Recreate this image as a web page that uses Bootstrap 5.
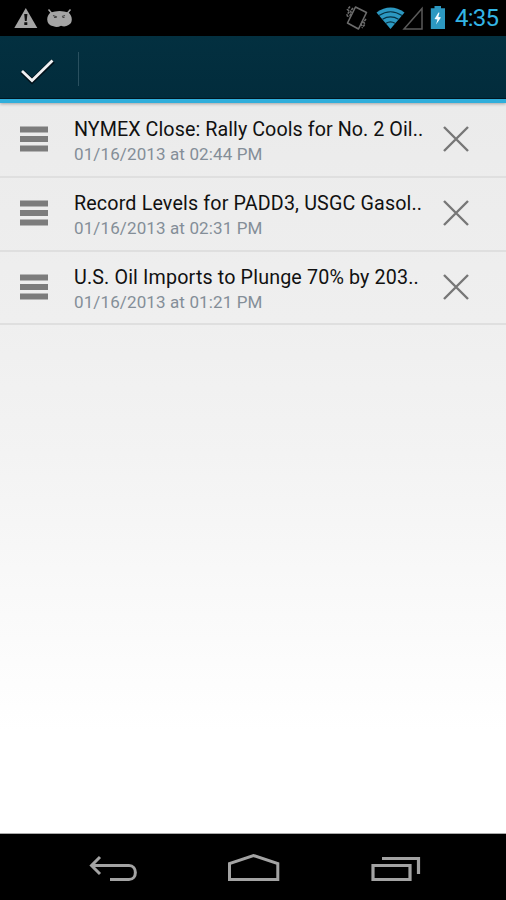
<!DOCTYPE html>
<html lang="en">
<head>
<meta charset="utf-8">
<meta name="viewport" content="width=device-width, initial-scale=1">
<title>Edit saved articles</title>
<link rel="stylesheet" href="https://cdn.jsdelivr.net/npm/bootstrap@5.3.0/dist/css/bootstrap.min.css">
<style>
body { font-family: Roboto, sans-serif; height: 900px; overflow: hidden; }
svg { display: block; flex: none; }
.status-bar { height: 36px; background: #000; padding: 0 8px 0 14px; }
.clock { font-size: 24px; line-height: 37px; color: #33b5e5; width: 43px; white-space: nowrap; letter-spacing: -.8px; }
.action-bar { height: 67px; background: linear-gradient(#033040, #022c3c); border-bottom: 4px solid #30aedb; box-shadow: inset 0 -1px #001722, 0 1px 3px rgba(0,0,0,.3); z-index: 1; }
.done-btn { width: 78px; height: 60px; padding: 6px 0 0 18px; border: 0; border-radius: 0; }
.bar-rule { width: 1px; height: 34px; margin-top: 3px; background: #29505f; }
.articles { background: linear-gradient(#ebebeb 0, #efefef 30%, #f3f3f3 48%, #fff 86%); padding-top: 1px; }
.article { height: 73.8px; padding: 0 35px 0 20px; border-bottom: 2px solid #dfdfdf; }
.article-text { width: 350px; margin-left: 26px; padding-top: 13px; }
.headline { font-size: 19.7px; line-height: 25px; color: #111; letter-spacing: .07px; }
.article:nth-child(2) .headline { letter-spacing: .15px; }
.article:nth-child(3) .headline { letter-spacing: .15px; }
.stamp { font-size: 17px; line-height: 24px; color: #848e98; letter-spacing: .12px; }
.nav-keys { height: 67px; background: #000; border-top: 1px solid #aaa; padding: 0 84px; }
</style>
</head>
<body class="d-flex flex-column m-0">
<header class="status-bar d-flex align-items-center justify-content-between">
  <svg width="60" height="36" viewBox="14 0 60 36" fill="#a5a5a5">
    <path d="M25.800 8L37.300 28H14.300Z"/>
    <path d="M24.200 14h3.200l-.7 7h-1.800zM24.300 22.300h3v2.600h-3z" fill="#111"/>
    <path d="M48.500 9.500L51.500 13M70.500 9.500L67.500 13" stroke="#a5a5a5" stroke-width="1.500"/>
    <path d="M50.500 12.500Q59.500 9.500 68.500 12.500Q71.800 15.500 71.800 19.500Q71.800 23.500 68.500 25Q65 27.500 61 25.800Q57 28 53.500 26.300Q47.300 25 47.200 19.500Q47.200 15.500 50.500 12.500Z"/>
    <path d="M53 15.500l4 1.500M62 16.500l3-1M54 17.500h2.500M62.500 17.500h2" stroke="#444" stroke-width="1.200" fill="none"/>
  </svg>
  <div class="d-flex">
    <svg width="110" height="36" viewBox="345 0 110 36">
      <g fill="none" stroke="#6c6c6c" stroke-width="1.600">
        <path d="M355.500 7L366.500 12.500 358.500 29 347.500 23Z" stroke-linejoin="round"/>
        <path d="M350 6.500l-2.500 3 2 2-2.500 3 1 3M353 8l-2.500 3 1 2-2.500 4M366 19l-2.500 3 1.500 2-3 4M363 21l-2 3 1 2" stroke-dasharray="2.500 1"/>
      </g>
      <path d="M376.500 12.500Q390.500 2.500 404.500 12.500L390.500 29Z" fill="#2c98c1"/>
      <path d="M379 15.500Q390.500 8 402 15.500M382.500 19.300Q390.500 14.500 398.500 19.300M386 23.300Q390.500 20.500 395 23.300" fill="none" stroke="#063142" stroke-width="1.200"/>
      <path d="M422 8.500V29H404Z" fill="none" stroke="#5a5a5a" stroke-width="1.500"/>
      <path d="M434.500 6h6.500v2.300h4V29H430.800V8.300h3.700z" fill="#2c98c1"/>
      <path d="M438.500 12.500l-4 6.500 3 .5-1.500 5 5-7-2.700-.7 1.200-4z" fill="#f4fbff"/>
    </svg>
    <div class="clock">4:35</div>
  </div>
</header>
<nav class="action-bar d-flex align-items-center position-relative">
  <button class="btn done-btn" aria-label="Done">
    <svg width="40" height="36" viewBox="18 52 40 36"><path d="M22 70.500L32 80 53 60" fill="none" stroke="#001019" stroke-width="5"/><path d="M22 70L32 79.500 52.500 59.500" fill="none" stroke="#f0f1f3" stroke-width="2.800"/></svg>
  </button>
  <div class="bar-rule"></div>
</nav>
<main class="articles flex-grow-1">
  <div class="article d-flex">
    <svg width="28" height="71" viewBox="0 1 28 71"><path d="M0 23.500h28v6H0zM0 33h28v6H0zM0 42.500h28v6H0z" fill="#7c7c7c"/></svg>
    <div class="article-text text-nowrap"><div class="headline">NYMEX Close: Rally Cools for No. 2 Oil..</div><div class="stamp">01/16/2013 at 02:44 PM</div></div>
    <svg class="ms-auto" width="48" height="71" viewBox="0 1 48 71"><path d="M21 24L45 48M45 24L21 48" stroke="#777" stroke-width="2.400"/></svg>
  </div>
  <div class="article d-flex">
    <svg width="28" height="71" viewBox="0 1 28 71"><path d="M0 23.500h28v6H0zM0 33h28v6H0zM0 42.500h28v6H0z" fill="#7c7c7c"/></svg>
    <div class="article-text text-nowrap"><div class="headline">Record Levels for PADD3, USGC Gasol..</div><div class="stamp">01/16/2013 at 02:31 PM</div></div>
    <svg class="ms-auto" width="48" height="71" viewBox="0 1 48 71"><path d="M21 24L45 48M45 24L21 48" stroke="#777" stroke-width="2.400"/></svg>
  </div>
  <div class="article d-flex">
    <svg width="28" height="71" viewBox="0 1 28 71"><path d="M0 23.500h28v6H0zM0 33h28v6H0zM0 42.500h28v6H0z" fill="#7c7c7c"/></svg>
    <div class="article-text text-nowrap"><div class="headline">U.S. Oil Imports to Plunge 70% by 203..</div><div class="stamp">01/16/2013 at 01:21 PM</div></div>
    <svg class="ms-auto" width="48" height="71" viewBox="0 1 48 71"><path d="M21 24L45 48M45 24L21 48" stroke="#777" stroke-width="2.400"/></svg>
  </div>
</main>
<footer class="nav-keys d-flex justify-content-between">
  <svg width="60" height="66" viewBox="84 834 60 66" fill="none" stroke="#a3a3a3" stroke-width="3"><path d="M100 857L91.500 865.500 100 874M91.500 865.500H129C137.500 865.500 137.500 879.500 129 879.500H110"/></svg>
  <svg width="60" height="66" viewBox="223 834 60 66" fill="none" stroke="#a3a3a3" stroke-width="3"><path d="M229.500 879.500V863.500L253.500 855.500 277.800 863.500V879.500Z"/></svg>
  <svg width="60" height="66" viewBox="362 834 60 66" fill="none" stroke="#a3a3a3" stroke-width="3.200"><path d="M373 865.500H410V879.500H373ZM382 858.500H418.500V874"/></svg>
</footer>
<script src="https://cdn.jsdelivr.net/npm/bootstrap@5.3.0/dist/js/bootstrap.bundle.min.js"></script>
</body>
</html>
